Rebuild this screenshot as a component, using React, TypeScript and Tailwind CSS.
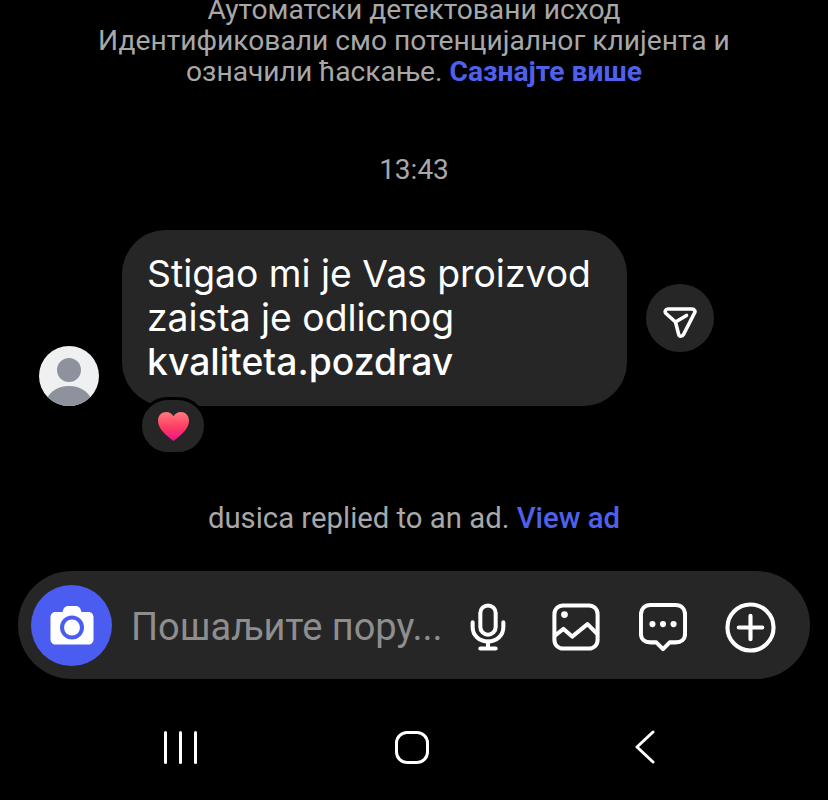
import React from "react";

const roboto = "font-['Roboto',sans-serif]";

function Camera() {
  return (
    <svg width="44" height="40" viewBox="0 0 44 40" fill="none">
      <path d="M13 5.500C13.800 2.500 15.500 1 18 1h8c2.500 0 4.200 1.500 5 4.500l.4 1.500H38c3.500 0 5.500 2 5.500 5.500V34c0 3.500-2 5.500-5.500 5.500H6C2.500 39.500.5 37.500.5 34V12.500C.5 9 2.500 7 6 7h6.600z" fill="#fff" />
      <circle cx="22" cy="22.500" r="12" fill="#4a5df0" />
      <circle cx="22" cy="22.500" r="8" fill="#fff" />
    </svg>
  );
}

function Mic() {
  return (
    <svg width="38" height="48" viewBox="0 0 38 50" fill="none" stroke="#fff" strokeWidth="4.200" strokeLinecap="round" strokeLinejoin="round">
      <rect x="11" y="2.500" width="16" height="30.500" rx="8" />
      <path d="M3 20v5c0 9 7 15 16 15s16-6 16-15v-5" />
      <path d="M19 40v7" />
      <path d="M11 47.500h16" />
    </svg>
  );
}

function ImageIcon() {
  return (
    <svg width="48" height="48" viewBox="0 0 50 50" fill="none" stroke="#fff" strokeWidth="4.200" strokeLinecap="round" strokeLinejoin="round">
      <rect x="2.500" y="2.500" width="45" height="45" rx="9" />
      <circle cx="13" cy="12" r="3.500" fill="#fff" stroke="none" />
      <path d="M3 34l9-7 9 8 16-13 10 10" />
    </svg>
  );
}

function ChatIcon() {
  return (
    <svg width="48" height="50" viewBox="0 0 50 52" fill="none" stroke="#fff" strokeWidth="4.200" strokeLinecap="round" strokeLinejoin="round">
      <path d="M12 3h26c6 0 10 4 10 10v20c0 6-4 9-10 9h-6l-7 7-7-7h-6C6 42 2 39 2 33V13C2 7 6 3 12 3z" />
      <circle cx="14" cy="23" r="3.200" fill="#fff" stroke="none" />
      <circle cx="25" cy="23" r="3.200" fill="#fff" stroke="none" />
      <circle cx="36" cy="23" r="3.200" fill="#fff" stroke="none" />
    </svg>
  );
}

function PlusIcon() {
  return (
    <svg width="51" height="51" viewBox="0 0 52 52" fill="none" stroke="#fff" strokeWidth="4.200" strokeLinecap="round">
      <circle cx="26" cy="26" r="23.500" />
      <path d="M26 14v24M14 26h24" />
    </svg>
  );
}

function ShareIcon() {
  return (
    <svg className="mt-[10px]" width="34" height="32" viewBox="0 0 34 32" fill="none" stroke="#fff" strokeWidth="3.600" strokeLinecap="round" strokeLinejoin="round">
      <path d="M5 2h24c2.500 0 3.600 2.200 2.500 4L20.500 27.500c-1.300 2.500-4.300 2.300-4.900-.4L12.500 15 3 6.500C1.300 4.800 2.500 2 5 2z" />
      <path d="M12.500 15L23.500 8.500" />
    </svg>
  );
}

function Avatar() {
  return (
    <div className="relative h-[60px] w-[60px] shrink-0 overflow-hidden rounded-full bg-[#eff0f2]">
      <svg width="60" height="60" viewBox="0 0 60 60">
        <circle cx="30" cy="24" r="12" fill="#8e929d" />
        <ellipse cx="30" cy="58" rx="23" ry="18" fill="#8e929d" />
      </svg>
    </div>
  );
}

function Heart() {
  return (
    <svg width="33" height="31" viewBox="0 0 34 32">
      <defs>
        <linearGradient id="h" x1="0" y1="0" x2="0" y2="1">
          <stop offset="0" stopColor="#ff7a7f" />
          <stop offset=".55" stopColor="#ff3b62" />
          <stop offset="1" stopColor="#e8128c" />
        </linearGradient>
      </defs>
      <path d="M17 31C10 25.500 1 18.500 1 10 1 4.500 5 1 9.500 1c3.300 0 6 1.700 7.500 4.500C18.500 2.700 21.200 1 24.500 1 29 1 33 4.500 33 10c0 8.500-9 15.500-16 21z" fill="url(#h)" />
    </svg>
  );
}

export default function App() {
  return (
    <div className={`flex h-[800px] w-[828px] flex-col overflow-hidden bg-black ${roboto}`}>
      <div className="-mt-[6px] text-center text-[28.200px] leading-[31px] text-[#a8a8a8]">
        <p>Аутоматски детектовани исход</p>
        <p>Идентификовали смо потенцијалног клијента и</p>
        <p>
          означили ћаскање. <span className="font-bold text-[#4f61ea]">Сазнајте више</span>
        </p>
      </div>

      <p className="mt-[67px] text-center text-[28px] leading-[31px] text-[#a8a8a8]">13:43</p>

      <div className="mt-[45px] flex items-end pl-[39px]">
        <Avatar />
        <div className="relative ml-[23px] h-[176px] w-[505px] rounded-[44px] bg-[#262626] px-[25px] pt-[22px] font-['Inter',sans-serif] text-[37.300px] leading-[44px] text-white">
          <p>Stigao mi je Vas proizvod</p>
          <p>zaista je odlicnog</p>
          <p className="font-medium">kvaliteta.pozdrav</p>
          <div className="absolute left-[17px] top-[167px] flex h-[58px] w-[68px] items-center justify-center rounded-full border-[3px] border-black bg-[#262626]">
            <Heart />
          </div>
        </div>
        <div className="mb-[54px] ml-[19px] flex h-[68px] w-[68px] items-center justify-center rounded-full bg-[#262626]">
          <ShareIcon />
        </div>
      </div>

      <p className="mt-[97px] text-center text-[29.300px] leading-[31px] text-[#a8a8a8]">
        dusica replied to an ad. <span className="font-medium text-[#4f61ea]">View ad</span>
      </p>

      <div className="mx-[18px] mt-[37px] flex h-[108px] items-center rounded-[54px] bg-[#262626] pl-[13px]">
        <div className="flex h-[81px] w-[81px] shrink-0 items-center justify-center rounded-full bg-[#4a5df0]">
          <Camera />
        </div>
        <p className="ml-[19px] mt-[3px] w-[310px] shrink-0 whitespace-nowrap text-[38px] leading-[44px] text-[#8e8e8e]">Пошаљите пору...</p>
        <div className="ml-[28px] mt-[4px] flex items-center">
          <Mic />
          <div className="ml-[45px]"><ImageIcon /></div>
          <div className="ml-[39px]"><ChatIcon /></div>
          <div className="ml-[38px]"><PlusIcon /></div>
        </div>
      </div>

      <div className="mt-[51px] flex items-center pl-[164px]">
        <div className="flex h-[33px] gap-[12px]">
          <span className="h-full w-[3px] rounded-full bg-white" />
          <span className="h-full w-[3px] rounded-full bg-white" />
          <span className="h-full w-[3px] rounded-full bg-white" />
        </div>
        <div className="ml-[198px] h-[33px] w-[34px] rounded-[12px] border-[3px] border-white" />
        <svg className="ml-[206px]" width="20" height="34" viewBox="0 0 20 34" fill="none" stroke="#fff" strokeWidth="3" strokeLinecap="round" strokeLinejoin="round">
          <path d="M18 2L2 17l16 15" />
        </svg>
      </div>
    </div>
  );
}
